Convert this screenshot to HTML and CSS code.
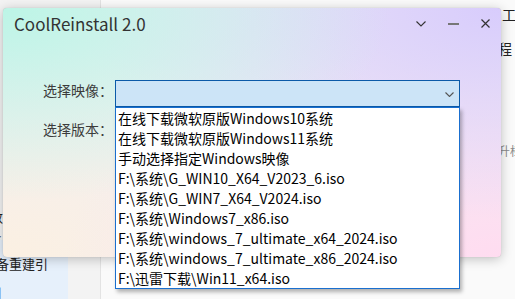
FILE: index.html
```html
<!DOCTYPE html>
<html lang="zh-CN">
<head>
    <meta charset="UTF-8">
    <title>CoolReinstall 2.0</title>
    <link rel="stylesheet" href="styles.css">
</head>
<body>
    <div class="desktop">
        <!-- app window behind -->
        <div class="back-app">
            <div class="back-side">
                <span class="side-text t1">数据</span>
                <span class="side-text t2">系统</span>
                <div class="side-item active">准备重建引</div>
                <span class="side-text t3">引</span>
            </div>
            <div class="back-main">
                <span class="main-text m1">工</span>
                <span class="main-text m2">程</span>
                <span class="main-text m3">升档</span>
            </div>
        </div>

        <div class="window">
            <div class="titlebar">
                <span class="title">CoolReinstall 2.0</span>
                <div class="controls">
                    <span class="ctl">
                        <svg width="10" height="6" viewBox="0 0 10 6"><polyline points="0.5,0.5 5,5 9.5,0.5" fill="none" stroke="#333" stroke-width="1.1"/></svg>
                    </span>
                    <span class="ctl">
                        <svg width="11" height="2" viewBox="0 0 11 2"><rect x="0" y="0" width="11" height="2" fill="#777"/></svg>
                    </span>
                    <span class="ctl">
                        <svg width="9" height="9" viewBox="0 0 9 9"><path d="M0.5 0.5 L8.5 8.5 M8.5 0.5 L0.5 8.5" stroke="#333" stroke-width="1.2"/></svg>
                    </span>
                </div>
            </div>
            <div class="form">
                <label class="label">选择映像：</label>
                <div class="combo">
                    <svg class="arrow" width="9" height="5" viewBox="0 0 9 5"><polyline points="0.5,0.5 4.5,4.5 8.5,0.5" fill="none" stroke="#555" stroke-width="1.1"/></svg>
                    <ul class="dropdown">
                        <li>在线下载微软原版Windows10系统</li>
                        <li>在线下载微软原版Windows11系统</li>
                        <li>手动选择指定Windows映像</li>
                        <li>F:\系统\G_WIN10_X64_V2023_6.iso</li>
                        <li>F:\系统\G_WIN7_X64_V2024.iso</li>
                        <li>F:\系统\Windows7_x86.iso</li>
                        <li>F:\系统\windows_7_ultimate_x64_2024.iso</li>
                        <li>F:\系统\windows_7_ultimate_x86_2024.iso</li>
                        <li>F:\迅雷下载\Win11_x64.iso</li>
                    </ul>
                </div>
                <label class="label">选择版本：</label>
                <div class="combo-empty"></div>
            </div>
        </div>
    </div>
</body>
</html>
```

FILE: styles.css
```css
html, body {
    margin: 0;
    padding: 0;
}
body {
    width: 515px;
    height: 299px;
    overflow: hidden;
    font-family: "Noto Sans CJK SC", "Noto Sans", sans-serif;
}
.desktop {
    position: relative;
    width: 515px;
    height: 299px;
}

/* window behind */
.back-app {
    position: absolute;
    inset: 0;
    display: grid;
    grid-template-columns: 100px 1fr;
}
.back-side {
    position: relative;
    background: #f3f3f3;
    overflow: hidden;
}
.back-main {
    position: relative;
    background: #fafafa;
    border-left: 1px solid #e3e3e3;
}
.side-text,
.main-text {
    position: absolute;
    font-size: 13px;
    line-height: 14px;
    color: #222;
    white-space: nowrap;
}
.t1 { left: -10px; top: 210px; }
.t2 { left: -10px; top: 235px; }
.t3 { left: -11px; top: 286px; }
.side-item {
    position: absolute;
    left: 0;
    top: 240px;
    width: 68px;
    height: 60px;
    box-sizing: border-box;
    padding-top: 17px;
    text-indent: -17px;
    background: #e6f0fb;
    font-size: 13px;
    line-height: 14px;
    color: #222;
    white-space: nowrap;
    overflow: hidden;
}
.m1 { left: 401px; top: 7px; font-size: 14px; }
.m2 { left: 397px; top: 41px; font-size: 14px; }
.m3 { left: 397px; top: 144px; font-size: 12px; color: #8a8a8a; }

/* main window */
.window {
    position: absolute;
    left: 3px;
    top: 8px;
    width: 498px;
    height: 249px;
    border-radius: 4px;
    box-shadow: 0 2px 12px rgba(0, 0, 0, 0.24), 0 0 1px rgba(0, 0, 0, 0.2);
    background:
        radial-gradient(ellipse at 0% 0%, rgba(188, 245, 230, 1) 0%, rgba(188, 245, 230, 0) 55%),
        radial-gradient(ellipse at 100% 0%, rgba(216, 204, 252, 1) 0%, rgba(216, 204, 252, 0) 60%),
        radial-gradient(ellipse at 100% 100%, rgba(255, 220, 240, 1) 0%, rgba(255, 220, 240, 0) 62%),
        radial-gradient(ellipse at 0% 100%, rgba(251, 240, 226, 1) 0%, rgba(251, 240, 226, 0) 60%),
        #f1eef4;
}
.titlebar {
    height: 30px;
    display: flex;
    align-items: center;
    justify-content: space-between;
    padding-left: 11px;
}
.title {
    font-size: 17px;
    color: #333;
}
.controls {
    display: flex;
    height: 30px;
}
.ctl {
    width: 32px;
    height: 30px;
    display: flex;
    align-items: center;
    justify-content: center;
    padding-top: 1px;
    box-sizing: border-box;
}

.form {
    display: grid;
    grid-template-columns: 110px 345px;
    grid-auto-rows: 27px;
    column-gap: 2px;
    row-gap: 12px;
    padding-top: 42px;
}
.label {
    font-size: 14px;
    line-height: 27px;
    color: #3c3c3c;
    text-align: right;
    margin-top: -3px;
}
.combo {
    position: relative;
    box-sizing: border-box;
    height: 27px;
    border: 1px solid #0b5aa8;
    background: #cce4f7;
    display: flex;
    align-items: center;
    justify-content: flex-end;
    padding-right: 5px;
}
.arrow {
    margin-top: 1px;
}
.dropdown {
    position: absolute;
    left: -1px;
    top: 26px;
    width: 345px;
    box-sizing: border-box;
    margin: 0;
    padding: 0;
    list-style: none;
    background: #fff;
    border: 1px solid #1a6fcf;
    box-shadow: 2px 3px 4px rgba(0, 0, 0, 0.3);
    z-index: 2;
}
.dropdown li {
    height: 20px;
    line-height: 20px;
    padding-left: 2px;
    font-size: 14px;
    color: #000;
    white-space: nowrap;
}
```
